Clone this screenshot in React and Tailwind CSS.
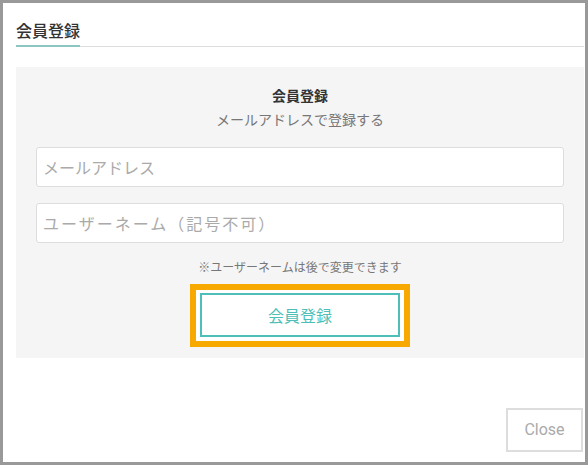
export default function App() {
  const jp = { fontFamily: '"Noto Sans CJK JP", "Noto Sans", sans-serif' };

  return (
    <div
      className="w-[588px] h-[465px] border-[3px] border-[#999999] bg-white text-[#333333] flex flex-col"
      style={jp}
    >
      <div className="ml-[13px] mr-[1px]">
        <div className="border-b border-[#dddddd]">
          <div className="inline-block pt-[15px] pb-[3px] border-b-2 border-[#8cc6c2] -mb-px text-[16px] leading-[24px] font-medium">
            会員登録
          </div>
        </div>

        <div className="mt-[20px] bg-[#f5f5f5] pt-[18px] pb-[11px] px-[20px] flex flex-col items-center">
          <h2 className="text-[14px] leading-[20px] font-bold text-[#333333]">会員登録</h2>
          <p className="mt-[4px] text-[14px] leading-[20px] text-[#777777]">メールアドレスで登録する</p>

          <input
            className="mt-[18px] w-full h-[40px] bg-white border border-[#dddddd] rounded-[3px] px-[6px] text-[16px] outline-none placeholder:text-[#aaaaaa]"
            placeholder="メールアドレス"
          />
          <input
            className="mt-[16px] w-full h-[40px] bg-white border border-[#dddddd] rounded-[3px] px-[6px] text-[16px] tracking-[2px] outline-none placeholder:text-[#aaaaaa]"
            placeholder="ユーザーネーム（記号不可）"
          />

          <p className="mt-[16px] text-[12px] leading-[16px] text-[#777777]">※ユーザーネームは後で変更できます</p>

          <div className="mt-[9px] border-[6px] border-[#f7a900] bg-white pt-[3px] pb-[4px] px-[4px]">
            <button className="w-[200px] h-[44px] border-2 border-[#4dbfb8] bg-white text-[16px] text-[#4dbfb8]">
              会員登録
            </button>
          </div>
        </div>
      </div>

      <div className="mt-[50px] flex justify-end pr-[2px]">
        <button
          className="w-[77px] h-[44px] border-2 border-[#dddddd] bg-white text-[16px] text-[#aaaaaa]"
          style={{ fontFamily: 'Roboto, "Liberation Sans", sans-serif' }}
        >
          Close
        </button>
      </div>
    </div>
  );
}
